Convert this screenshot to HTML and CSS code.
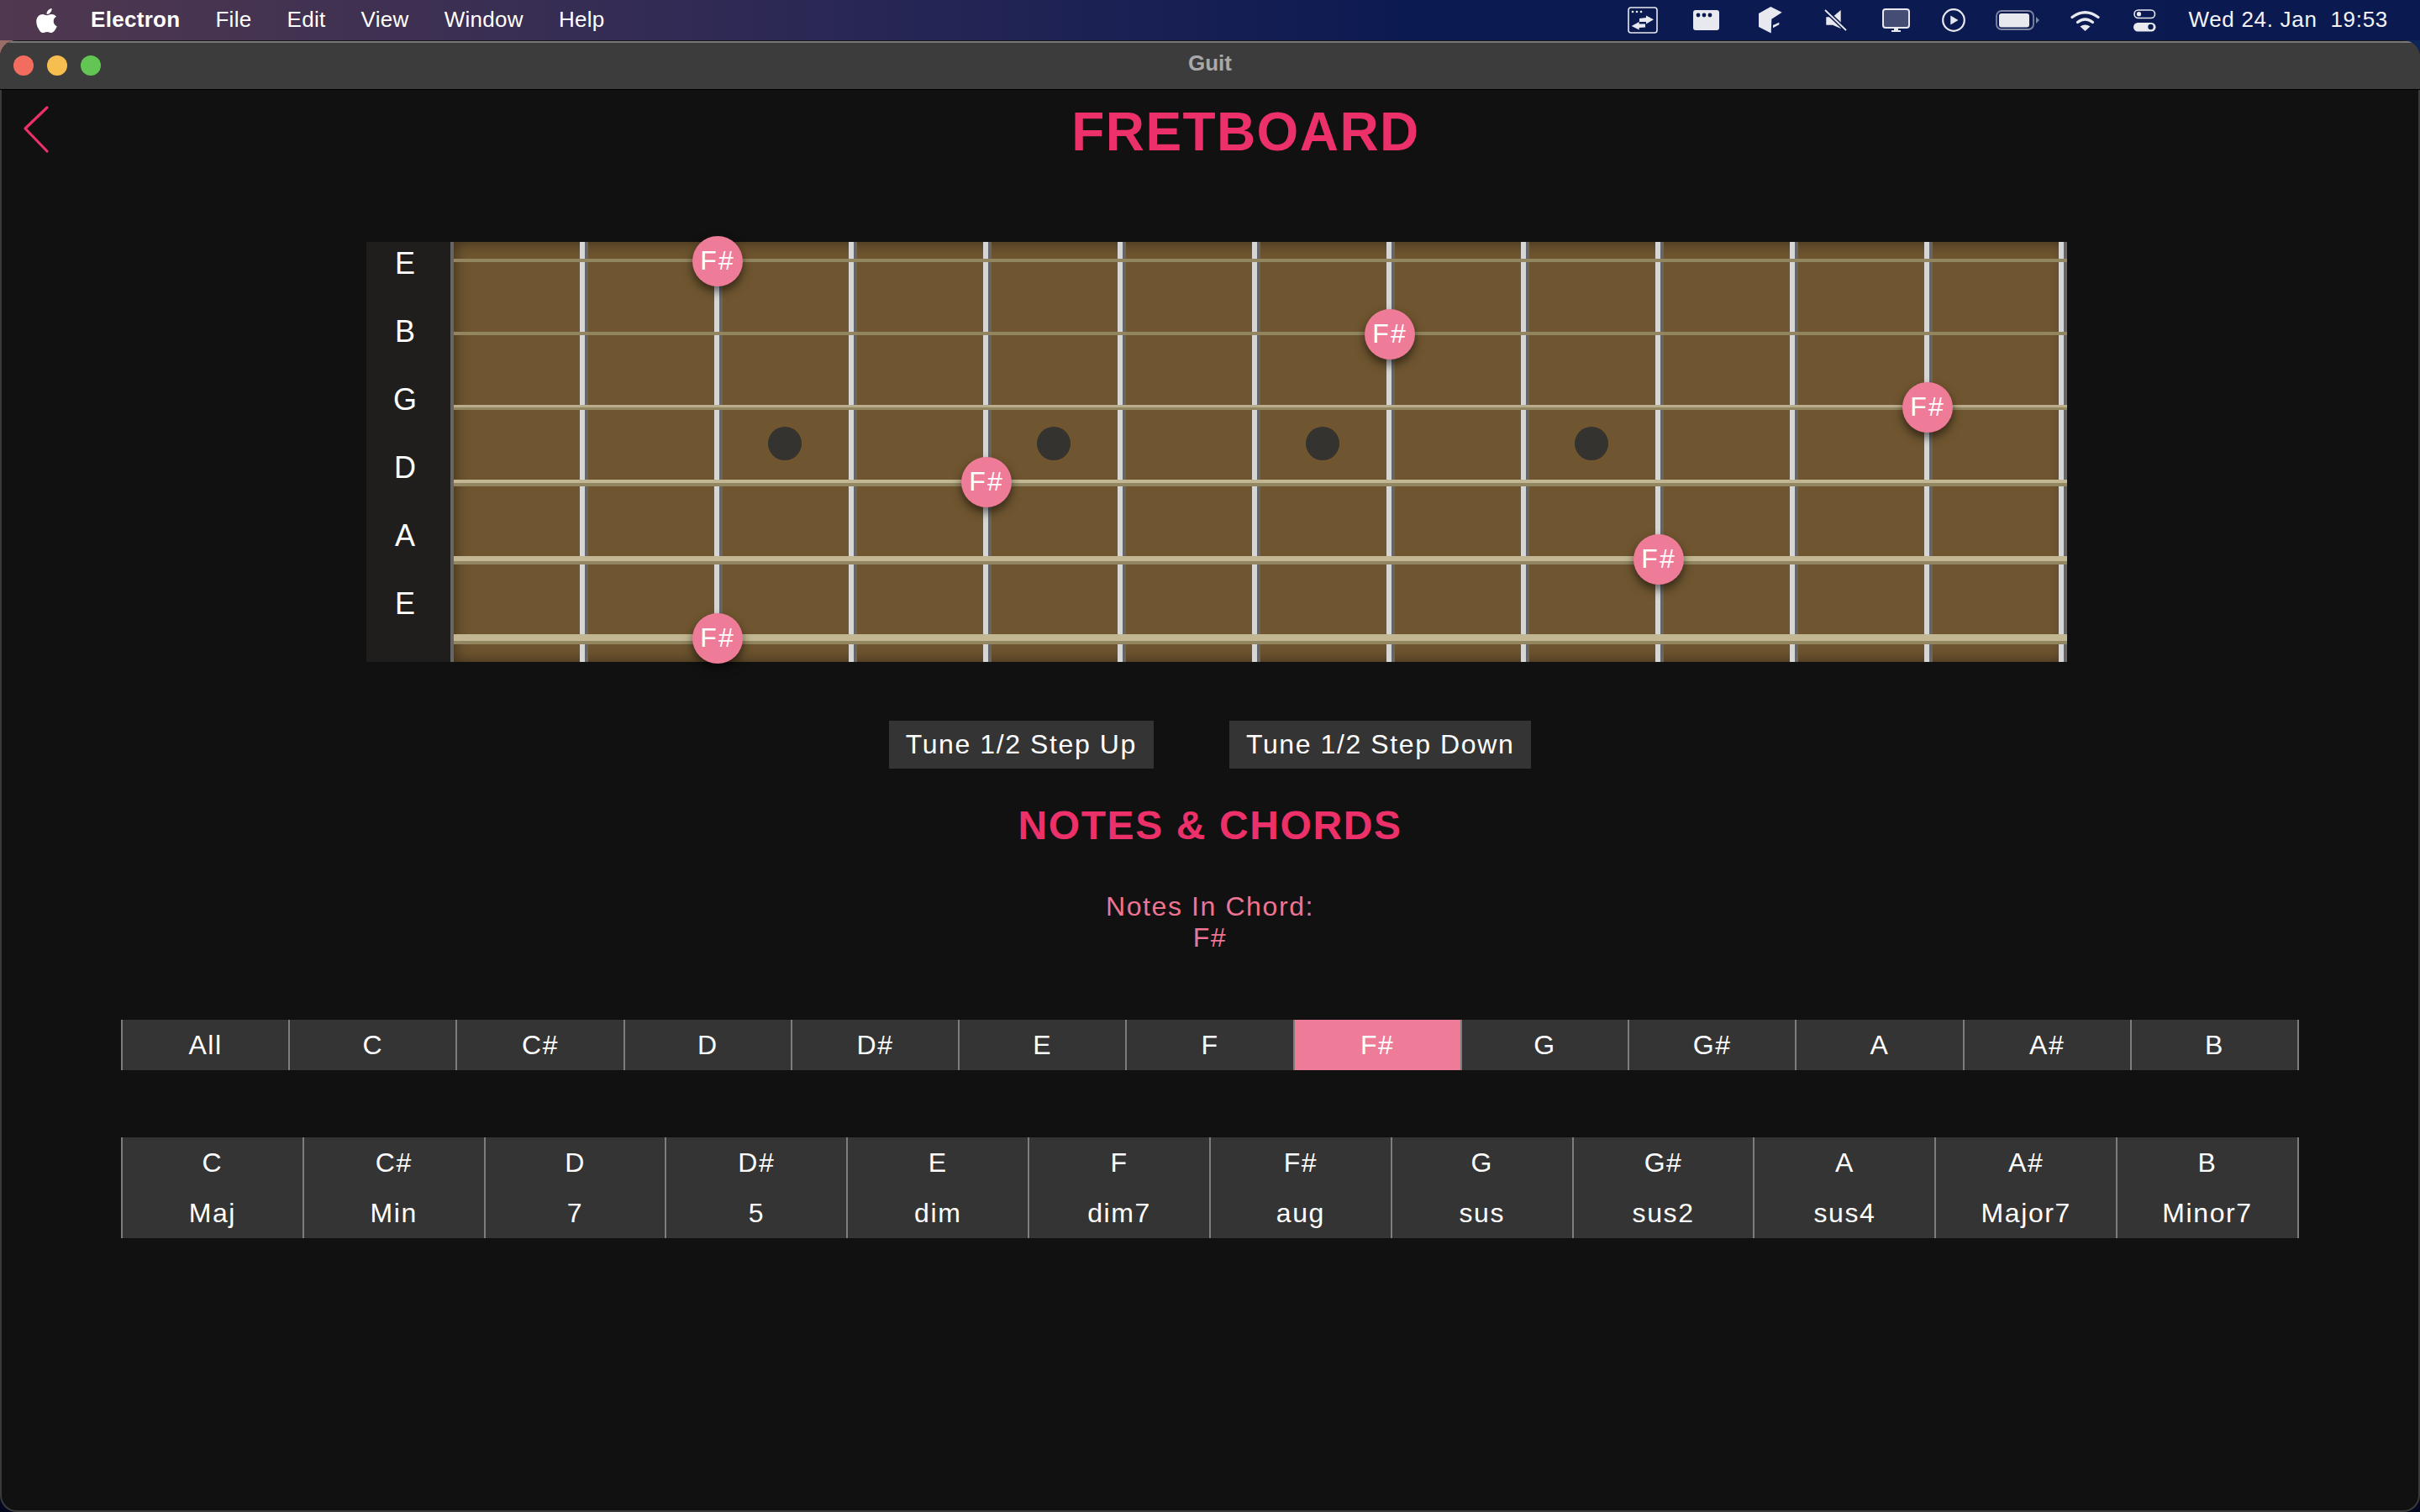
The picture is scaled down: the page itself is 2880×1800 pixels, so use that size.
FILE: index.html
```html
<!DOCTYPE html>
<html lang="en">
  <head>
    <meta charset="UTF-8" />
    <title>Guit</title>
    <link rel="stylesheet" href="styles.css">
  </head>
  <body>
    <!-- macOS menu bar -->
    <div class="menubar">
      <svg class="apple" width="25" height="31" viewBox="0 28 384 456"><path d="M318.7 268.7c-.2-36.7 16.4-64.4 50-84.8-18.8-26.9-47.2-41.7-84.7-44.6-35.5-2.8-74.3 20.7-88.5 20.7-15 0-49.4-19.7-76.4-19.7C63.3 141.2 4 184.8 4 273.5q0 39.3 14.4 81.2c12.8 36.7 59 126.7 107.2 125.2 25.2-.6 43-17.9 75.8-17.9 31.8 0 48.3 17.9 76.4 17.9 48.6-.7 90.4-82.5 102.6-119.3-65.2-30.7-61.7-90-61.7-91.9zm-56.6-164.2c27.3-32.4 24.8-61.9 24-72.5-24.1 1.4-52 16.4-67.9 34.9-17.5 19.8-27.8 44.3-25.6 71.9 26.1 2 49.9-11.4 69.5-34.3z"/></svg>
      <span class="menu-app">Electron</span>
      <span>File</span>
      <span>Edit</span>
      <span>View</span>
      <span>Window</span>
      <span>Help</span>
      <div class="tray">
        <svg class="tray-sync" width="36" height="32" viewBox="0 0 36 32">
          <rect x="1" y="1" width="34" height="30" rx="3" fill="none" stroke="#e8e9ef" stroke-width="1.6"/>
          <circle cx="6" cy="6" r="1.3"/><circle cx="11" cy="6" r="1.3"/><circle cx="16" cy="6" r="1.3"/>
          <polygon points="31,15.3 22,10.5 22,13 14,14 14,18 22,18 22,20.5"/>
          <polygon points="4.7,23 13.7,18 13.7,20.5 21,20.5 21,24.5 13.7,25 13.7,27.5"/>
        </svg>
        <svg class="tray-window" width="31" height="24" viewBox="0 0 31 24">
          <rect width="31" height="24" rx="3"/>
          <circle class="cut" cx="6" cy="6" r="2.4"/><circle class="cut" cx="13" cy="6" r="2.4"/><circle class="cut" cx="20" cy="6" r="2.4"/>
        </svg>
        <svg class="tray-box" width="28" height="32" viewBox="0 0 28 32">
          <polygon points="14.3,0 27.7,6.7 15.3,14.7 14.7,31.5 0,24 0,8"/>
          <polygon points="17,22 24.3,18.7 24.3,21.3 17,25.3"/>
        </svg>
        <svg class="tray-mute" width="27" height="26" viewBox="0 0 27 26">
          <polygon points="19.7,1 19.7,23 10,18.7 2.3,18.7 2.3,9.3 10,9.3"/>
          <line class="cut-line" x1="1" y1="1" x2="26" y2="25"/>
          <line class="slash" x1="1" y1="1" x2="26" y2="25"/>
        </svg>
        <svg class="tray-display" width="33" height="28" viewBox="0 0 33 28">
          <rect x="1" y="1" width="31" height="22" rx="3" fill="#454d74" stroke="#e8e9ef" stroke-width="2"/>
          <rect x="14" y="24" width="5" height="2"/>
          <rect x="11" y="26" width="11" height="2"/>
        </svg>
        <svg class="tray-play" width="28" height="28" viewBox="0 0 28 28">
          <circle cx="14" cy="14" r="12.8" fill="none" stroke="#e8e9ef" stroke-width="2.2"/>
          <polygon points="10.3,8.6 19.5,14 10.3,19.4"/>
        </svg>
        <svg class="tray-battery" width="52" height="24" viewBox="0 0 52 24">
          <rect x="1" y="1" width="44" height="22" rx="6" fill="none" stroke="#8086a0" stroke-width="1.8"/>
          <rect x="4" y="4" width="36" height="16.5" rx="3"/>
          <polygon points="48,8 52,12 48,16" fill="#8086a0"/>
        </svg>
        <svg class="tray-wifi" width="35" height="25" viewBox="0 0 35 25">
          <path d="M2 8.5 Q17.5 -3 33 8.5" fill="none" stroke="#e8e9ef" stroke-width="3.2" stroke-linecap="round"/>
          <path d="M8.5 14.5 Q17.5 7.5 26.5 14.5" fill="none" stroke="#e8e9ef" stroke-width="3.2" stroke-linecap="round"/>
          <path d="M17.5 25 L11.5 19.5 Q17.5 15.5 23.5 19.5 Z"/>
        </svg>
        <svg class="tray-control" width="27" height="27" viewBox="0 0 27 27">
          <rect x="1" y="1" width="24.5" height="9.5" rx="4.7" fill="none" stroke="#e8e9ef" stroke-width="1.6"/>
          <circle cx="6.5" cy="5.7" r="2.6"/>
          <rect y="16" width="26.5" height="10.5" rx="5.2"/>
          <circle class="cut" cx="20.5" cy="21" r="3.2"/>
        </svg>
        <span class="clock">Wed 24. Jan&nbsp;&nbsp;19:53</span>
      </div>
    </div>

    <div class="window">
      <div class="titlebar">
        <div class="lights">
          <span class="light red"></span>
          <span class="light yellow"></span>
          <span class="light green"></span>
        </div>
        <span class="title">Guit</span>
      </div>

      <div class="main">
        <div class="header">
          <div class="back">
            <svg width="32" height="58" viewBox="0 0 32 58"><polyline points="29,3 3,28 29,55" fill="none" stroke="#ec3069" stroke-width="3.2" stroke-linecap="round" stroke-linejoin="round"/></svg>
          </div>
          <h1>FRETBOARD</h1>
        </div>

        <div class="board">
          <div class="string-names">
            <span>E</span>
            <span>B</span>
            <span>G</span>
            <span>D</span>
            <span>A</span>
            <span>E</span>
          </div>
          <div class="neck">
            <div class="frets">
              <div class="fret"></div>
              <div class="fret"></div>
              <div class="fret"><span class="dot"></span></div>
              <div class="fret"></div>
              <div class="fret"><span class="dot"></span></div>
              <div class="fret"></div>
              <div class="fret"><span class="dot"></span></div>
              <div class="fret"></div>
              <div class="fret"><span class="dot"></span></div>
              <div class="fret"></div>
              <div class="fret"></div>
              <div class="fret"></div>
            </div>
            <div class="strings">
              <div class="string s1"><span class="note at-2">F#</span></div>
              <div class="string s2"><span class="note at-7">F#</span></div>
              <div class="string s3"><span class="note at-11">F#</span></div>
              <div class="string s4"><span class="note at-4">F#</span></div>
              <div class="string s5"><span class="note at-9">F#</span></div>
              <div class="string s6"><span class="note at-2">F#</span></div>
            </div>
          </div>
        </div>

        <div class="tune-buttons">
          <button>Tune 1/2 Step Up</button>
          <button>Tune 1/2 Step Down</button>
        </div>

        <h2>NOTES &amp; CHORDS</h2>

        <div class="chord-notes">
          <div>Notes In Chord:</div>
          <div>F#</div>
        </div>

        <div class="selector root-row">
          <div class="cell">All</div>
          <div class="cell">C</div>
          <div class="cell">C#</div>
          <div class="cell">D</div>
          <div class="cell">D#</div>
          <div class="cell">E</div>
          <div class="cell">F</div>
          <div class="cell active">F#</div>
          <div class="cell">G</div>
          <div class="cell">G#</div>
          <div class="cell">A</div>
          <div class="cell">A#</div>
          <div class="cell">B</div>
        </div>

        <div class="selector chord-row">
          <div class="cell">C<br />Maj</div>
          <div class="cell">C#<br />Min</div>
          <div class="cell">D<br />7</div>
          <div class="cell">D#<br />5</div>
          <div class="cell">E<br />dim</div>
          <div class="cell">F<br />dim7</div>
          <div class="cell">F#<br />aug</div>
          <div class="cell">G<br />sus</div>
          <div class="cell">G#<br />sus2</div>
          <div class="cell">A<br />sus4</div>
          <div class="cell">A#<br />Major7</div>
          <div class="cell">B<br />Minor7</div>
        </div>
      </div>
    </div>
  </body>
</html>
```

FILE: styles.css
```css
* {
  box-sizing: border-box;
}

html,
body {
  height: 100%;
}

body {
  margin: 0;
  overflow: hidden;
  font-family: "Liberation Sans", Arial, sans-serif;
  color: #fff;
  background: linear-gradient(to bottom, transparent 70px, #04081e 71px),
    linear-gradient(to right, #9a6e68, #0d2458 40%);
}

/* Menu bar */
.menubar {
  display: flex;
  align-items: center;
  gap: 42px;
  height: 48px;
  padding-left: 43px;
  font-size: 26px;
  letter-spacing: 0.3px;
  background: linear-gradient(to right, #50384f, #2f2a55 30%, #0c1a52 58%, #0a1a50);
}

.menubar svg {
  fill: #e8e9ef;
  flex-shrink: 0;
}

.menubar .apple {
  fill: #fff;
  margin-right: -2px;
}

.menubar span {
  padding-bottom: 2px;
}

.menu-app {
  font-weight: bold;
}

.tray {
  display: flex;
  align-items: center;
  margin-left: auto;
  padding-right: 38px;
}

.tray .cut {
  fill: #0a1a50;
}

.cut-line {
  stroke: #0a1a50;
  stroke-width: 5;
}

.slash {
  stroke: #e8e9ef;
  stroke-width: 1.8;
}

.tray-sync {
  margin-right: 42px;
}

.tray-window {
  margin-right: 47px;
}

.tray-box {
  margin-right: 50px;
}

.tray-mute {
  margin-right: 42px;
}

.tray-display {
  margin-right: 38px;
}

.tray-play {
  margin-right: 36px;
}

.tray-battery {
  margin-right: 37px;
}

.tray-wifi {
  margin-right: 40px;
}

.tray-control {
  margin-right: 38px;
}

.clock {
  font-size: 26px;
  letter-spacing: 0.7px;
  color: #f2f3f7;
}

/* Window */
.window {
  height: 1752px;
  border-radius: 20px;
  background-color: #111;
  box-shadow: inset 0 0 0 2px #3a3a3a;
  overflow: hidden;
}

.titlebar {
  position: relative;
  display: flex;
  align-items: center;
  justify-content: center;
  height: 59px;
  padding-bottom: 4px;
  background-color: #3c3c3c;
  border-top: 1px solid #1a1a1a;
  border-bottom: 1px solid #000;
  box-shadow: inset 0 2px 0 #777;
}

.lights {
  position: absolute;
  left: 16px;
  top: 17px;
  display: flex;
  gap: 16px;
}

.light {
  width: 24px;
  height: 24px;
  border-radius: 50%;
}

.red {
  background-color: #f26d5f;
}

.yellow {
  background-color: #f6be4f;
}

.green {
  background-color: #62c554;
}

.title {
  font-size: 26px;
  font-weight: bold;
  color: #a9a9a9;
}

/* Page */
.main {
  letter-spacing: 1.6px;
}

.header {
  display: flex;
  height: 87px;
  padding-top: 13px;
}

.back {
  width: 85px;
  flex-shrink: 0;
  padding: 5px 0 0 27px;
}

h1 {
  flex: 1;
  margin: 0;
  font-size: 64px;
  letter-spacing: 1.4px;
  text-align: center;
  color: #ec3069;
}

/* Fretboard */
.board {
  display: flex;
  width: 2024px;
  height: 500px;
  margin: 94px 0 0 436px;
}

.string-names {
  display: flex;
  flex-direction: column;
  gap: 31px;
  width: 104px;
  padding: 1px 8px 0 0;
  background-color: #1f1e1d;
  border-right: 4px solid #666;
}

.string-names span {
  height: 50px;
  line-height: 50px;
  font-size: 36px;
  letter-spacing: 0;
  text-align: center;
}

.neck {
  position: relative;
  width: 1920px;
}

.frets {
  display: flex;
  height: 100%;
  background-color: #6f5630;
  box-shadow: inset 0 0 18px rgba(0, 0, 0, 0.5);
}

.fret {
  display: flex;
  align-items: center;
  justify-content: center;
  width: 160px;
  padding: 0 8px 20px 0;
  border-right: 4px solid #666;
  box-shadow: inset -6px 0 0 #d6d6d6;
}

.dot {
  width: 40px;
  height: 40px;
  border-radius: 50%;
  background-color: #35332f;
}

.strings {
  position: absolute;
  inset: 0;
  display: flex;
  flex-direction: column;
  justify-content: space-between;
  padding: 20px 0 21px;
}

.string {
  position: relative;
  background-color: #c2b792;
  border-bottom: 0 solid #918660;
}

.s1,
.s2 {
  height: 4px;
  border-bottom-width: 4px;
}

.s3 {
  height: 6px;
  border-bottom-width: 3px;
  background-color: #b9ad8b;
}

.s4 {
  height: 8px;
  border-bottom-width: 4px;
}

.s5 {
  height: 10px;
  border-bottom-width: 4px;
}

.s6 {
  height: 12px;
  border-bottom-width: 4px;
}

.note {
  position: absolute;
  top: 50%;
  width: 60px;
  height: 60px;
  margin-top: -29px;
  border-radius: 50%;
  font-size: 32px;
  line-height: 58px;
  letter-spacing: 2px;
  text-align: center;
  background-color: #ee7b98;
  box-shadow: 0 6px 12px rgba(0, 0, 0, 0.55);
}

.s1 .note,
.s2 .note {
  margin-top: -27px;
}

.at-2 {
  left: 284px;
}

.at-4 {
  left: 604px;
}

.at-7 {
  left: 1084px;
}

.at-9 {
  left: 1404px;
}

.at-11 {
  left: 1724px;
}

/* Buttons and headings */
.tune-buttons {
  display: flex;
  justify-content: center;
  gap: 90px;
  margin-top: 70px;
}

.tune-buttons button {
  height: 57px;
  padding: 0 20px;
  border: none;
  font-family: inherit;
  font-size: 32px;
  letter-spacing: 1.6px;
  color: #fff;
  background-color: #343434;
}

h2 {
  margin: 40px 0 0;
  font-size: 48px;
  letter-spacing: 1.6px;
  text-align: center;
  color: #ec3069;
}

.chord-notes {
  margin-top: 51px;
  font-size: 32px;
  text-align: center;
  color: #ef7494;
}

/* Note and chord selectors */
.selector {
  display: grid;
  width: 2592px;
  margin: 0 auto;
  font-size: 32px;
  text-align: center;
  border-right: 2px solid #7d7d7d;
}

.cell {
  border-left: 2px solid #7d7d7d;
  background-color: #343434;
}

.cell.active {
  background-color: #ee7b98;
}

.root-row {
  grid-template-columns: repeat(13, 1fr);
  margin-top: 79px;
  line-height: 60px;
}

.chord-row {
  grid-template-columns: repeat(12, 1fr);
  margin-top: 80px;
  line-height: 60px;
}
```
